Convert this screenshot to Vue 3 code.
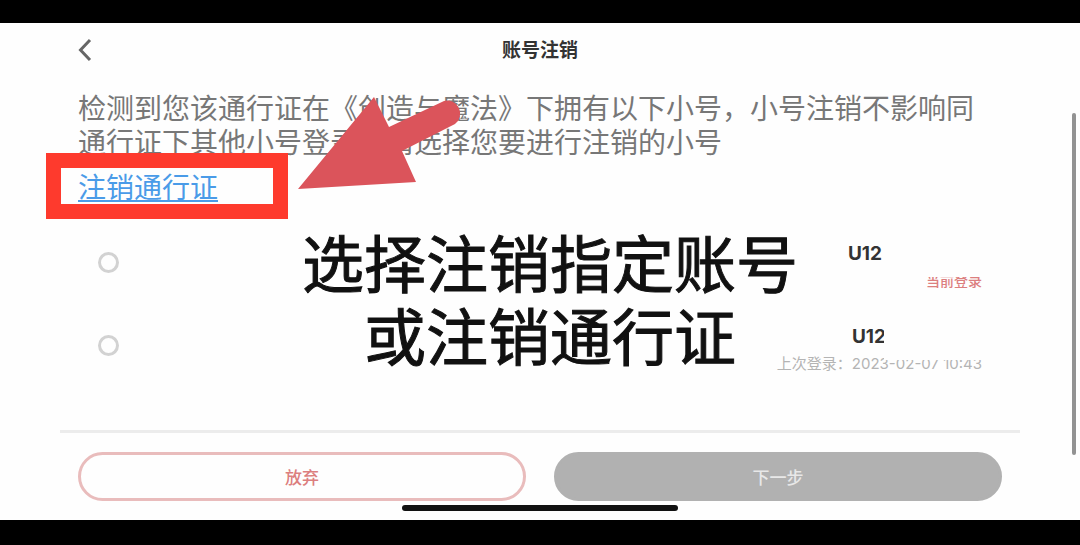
<script setup>
import { ref } from 'vue'

const selected = ref('')
const accounts = [
  { id: 'first', name: 'U12', note: '当前登录', current: true },
  { id: 'second', name: 'U12', note: '上次登录：2023-02-07 10:43', current: false },
]
</script>

<template>
  <div class="page">
    <main class="screen">
      <header class="header">
        <button class="back" type="button" aria-label="返回">
          <svg width="14" height="24" viewBox="0 0 14 24" fill="none" stroke="#666" stroke-width="3">
            <path d="M12 2 L2.5 12 L12 22" />
          </svg>
        </button>
        <h1 class="title">账号注销</h1>
      </header>

      <section class="notice">
        <p class="text">检测到您该通行证在《创造与魔法》下拥有以下小号，小号注销不影响同通行证下其他小号登录，请选择您要进行注销的小号</p>
        <div class="link-row">
          <a class="link" href="#">注销通行证</a>
          <span class="frame"></span>
        </div>
        <svg class="arrow" width="166" height="94" viewBox="298 96 166 94">
          <path d="M298 189 L374 97 L389 127 L444 101 A13 13 0 0 1 455 124 L402 151 L416 182 Z" fill="#db545b" />
        </svg>
      </section>

      <section class="list">
        <label v-for="a in accounts" :key="a.id" class="row">
          <input v-model="selected" class="radio" type="radio" name="account" :value="a.id" />
          <span class="info">
            <span class="name" :class="{ inset: a.current }">{{ a.name }}</span>
            <span class="note" :class="{ current: a.current }">{{ a.note }}</span>
            <span class="cover"></span>
          </span>
        </label>
        <p class="caption">选择注销指定账号<br />或注销通行证</p>
      </section>

      <footer class="footer">
        <button class="btn cancel" type="button">放弃</button>
        <button class="btn next" type="button">下一步</button>
      </footer>

      <span class="scrollbar"></span>
      <span class="home"></span>
    </main>
  </div>
</template>

<style>
body {
  background: #000;
}
</style>

<style scoped>
.page {
  box-sizing: border-box;
  min-height: 100vh;
  padding: 23px 0 25px;
  display: flex;
  flex-direction: column;
  background: #000;
  font-family: "Liberation Sans", "Noto Sans CJK SC", sans-serif;
}
.screen {
  position: relative;
  flex: 1;
  display: flex;
  flex-direction: column;
  background: #fefefe;
}
.header {
  display: grid;
  grid-template-columns: 1fr auto 1fr;
  align-items: center;
  height: 54px;
  padding: 0 78px;
}
.back {
  display: flex;
  justify-self: start;
  padding: 0;
  border: 0;
  background: none;
}
.title {
  margin: 0;
  padding-top: 2px;
  font-size: 19px;
  line-height: 28px;
  font-weight: 700;
  color: #333;
}
.notice {
  position: relative;
  padding: 16px 98px 0 78px;
  font-size: 28px;
  line-height: 34px;
}
.text {
  margin: 0;
  color: #777;
}
.link-row {
  position: relative;
  width: fit-content;
  margin-top: 11px;
}
.link {
  color: #4a9be8;
  text-decoration: underline;
  text-decoration-thickness: 2px;
  text-underline-offset: 2px;
}
.frame {
  position: absolute;
  top: -19px;
  left: -32px;
  right: -70px;
  bottom: -13px;
  border: 15px solid #fe3a2d;
  pointer-events: none;
}
.arrow {
  position: absolute;
  left: 298px;
  top: 19px;
  pointer-events: none;
}
.list {
  position: relative;
  flex: 1;
  margin: 15px 60px 0;
  border-bottom: 3px solid #ececec;
}
.row {
  display: flex;
  align-items: center;
  justify-content: space-between;
  height: 83px;
  padding: 0 38px;
}
.radio {
  appearance: none;
  box-sizing: border-box;
  width: 21px;
  height: 21px;
  margin: 0;
  border: 3px solid #d2d2d2;
  border-radius: 50%;
}
.radio:checked {
  border-color: #d9686c;
}
.info {
  position: relative;
  display: flex;
  flex-direction: column;
  align-items: flex-end;
  padding-top: 8px;
}
.name {
  margin-right: 96px;
  font-family: Inter, "Liberation Sans", sans-serif;
  font-size: 19px;
  line-height: 28px;
  font-weight: 700;
  color: #333;
}
.name.inset {
  margin-right: 100px;
}
.note {
  font-family: Inter, "Noto Sans CJK SC", sans-serif;
  font-size: 15px;
  line-height: 26px;
  color: #b4b4b4;
}
.note.current {
  font-size: 14px;
  font-weight: 500;
  color: #dc7f7f;
}
.cover {
  position: absolute;
  top: 0;
  right: 0;
  width: 98px;
  height: 45px;
  background: #fefefe;
}
.caption {
  position: absolute;
  top: 9px;
  left: 20px;
  right: 0;
  margin: 0;
  text-align: center;
  font-size: 62px;
  line-height: 73px;
  color: #111;
  -webkit-text-stroke: 1px #111;
  pointer-events: none;
}
.footer {
  display: flex;
  gap: 28px;
  padding: 19px 78px;
}
.btn {
  flex: 1;
  box-sizing: border-box;
  height: 49px;
  padding: 0;
  border: 3px solid #b1b1b1;
  border-radius: 25px;
  font-family: inherit;
  font-size: 17px;
  font-weight: 500;
}
.cancel {
  border-color: #e9bcbc;
  background: #fefefe;
  color: #dc7f7f;
}
.next {
  background: #b1b1b1;
  color: #e8e8e8;
}
.scrollbar {
  position: absolute;
  top: 90px;
  right: 4px;
  bottom: 65px;
  width: 4px;
  border-radius: 2px;
  background: #929292;
}
.home {
  position: absolute;
  left: 50%;
  bottom: 9px;
  width: 276px;
  height: 6px;
  margin-left: -138px;
  border-radius: 3px;
  background: #111;
}
</style>
